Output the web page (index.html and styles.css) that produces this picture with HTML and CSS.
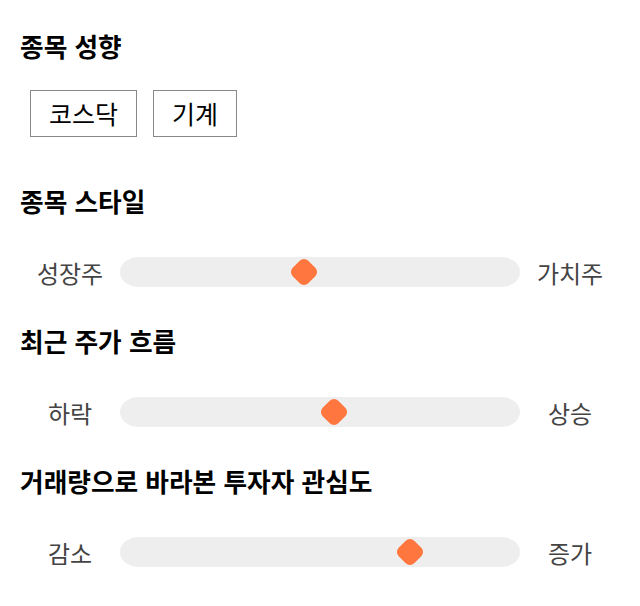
FILE: index.html
```html
<!DOCTYPE html>
<html lang="ko">
<head>
	<meta charset="utf-8">
	<title>종목 성향</title>
	<link rel="stylesheet" href="styles.css">
</head>
<body>
<div class="panel">

	<div class="h first">종목 성향</div>
	<div class="tags">
		<span class="tag">코스닥</span>
		<span class="tag">기계</span>
	</div>

	<div class="h">종목 스타일</div>
	<div class="s">
		<span class="l">성장주</span>
		<div class="track"><div class="thumb" style="left:46%"></div></div>
		<span class="l">가치주</span>
	</div>

	<div class="h">최근 주가 흐름</div>
	<div class="s">
		<span class="l">하락</span>
		<div class="track"><div class="thumb" style="left:53.5%"></div></div>
		<span class="l">상승</span>
	</div>

	<div class="h">거래량으로 바라본 투자자 관심도</div>
	<div class="s">
		<span class="l">감소</span>
		<div class="track"><div class="thumb" style="left:72.5%"></div></div>
		<span class="l">증가</span>
	</div>

</div>
</body>
</html>
```

FILE: styles.css
```css
body {
	margin:0;
	background:#fff;
	font-family:"Noto Sans CJK KR", "Noto Sans", sans-serif;
	color:#000;
	}
.panel {
	padding:30px 20px;
	}
.h {
	font-size:25.7px;
	font-weight:bold;
	line-height:32px;
	margin:38px 0 40px 0;
	}
.h.first {
	margin:0 0 28px 0;
	}
.tags {
	display:flex;
	gap:16px;
	padding:0 0 0 10px;
	margin-bottom:48px;
	}
.tag {
	border:1px solid #888;
	font-size:25px;
	line-height:45px;
	padding:0 18px;
	}
.s {
	display:flex;
	align-items:center;
	height:30px;
	padding:0 10px;
	}
.l {
	width:80px;
	text-align:center;
	font-size:24px;
	color:#444;
	}
.track {
	flex:1;
	position:relative;
	height:30px;
	margin:0 10px;
	background:#eee;
	border-radius:18px / 15px;
	}
.thumb {
	position:absolute;
	top:4px;
	width:22px;
	height:22px;
	margin-left:-11px;
	background:#ff763f;
	border-radius:6px;
	transform:rotate(45deg);
	}
```
